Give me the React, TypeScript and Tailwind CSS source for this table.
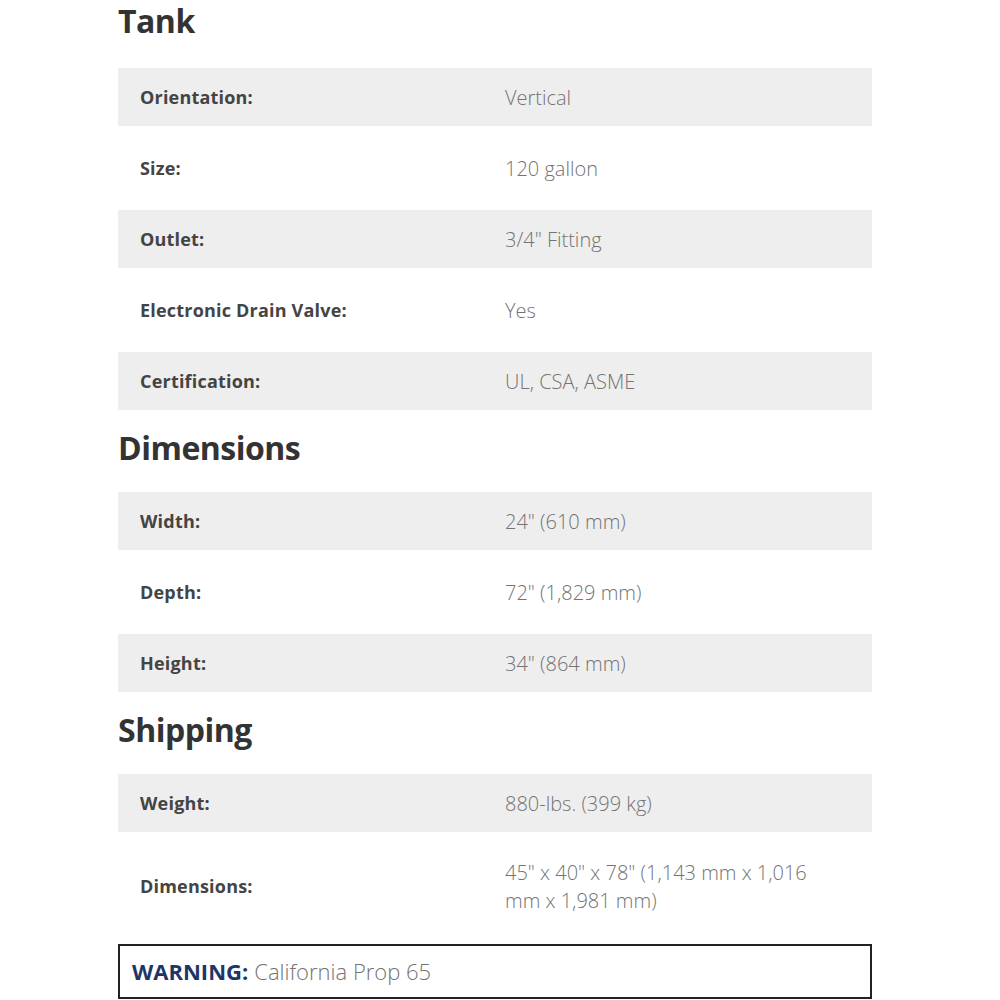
import React from 'react';

type Row = { label: string; value: string[]; tall?: boolean };
type Section = { title: string; rows: Row[] };

const sections: Section[] = [
  {
    title: 'Tank',
    rows: [
      { label: 'Orientation:', value: ['Vertical'] },
      { label: 'Size:', value: ['120 gallon'] },
      { label: 'Outlet:', value: ['3/4" Fitting'] },
      { label: 'Electronic Drain Valve:', value: ['Yes'] },
      { label: 'Certification:', value: ['UL, CSA, ASME'] },
    ],
  },
  {
    title: 'Dimensions',
    rows: [
      { label: 'Width:', value: ['24" (610 mm)'] },
      { label: 'Depth:', value: ['72" (1,829 mm)'] },
      { label: 'Height:', value: ['34" (864 mm)'] },
    ],
  },
  {
    title: 'Shipping',
    rows: [
      { label: 'Weight:', value: ['880-lbs. (399 kg)'] },
      { label: 'Dimensions:', value: ['45" x 40" x 78" (1,143 mm x 1,016', 'mm x 1,981 mm)'], tall: true },
    ],
  },
];

function SpecRow({ row, index }: { row: Row; index: number }) {
  const shaded = index % 2 === 0;
  const height = shaded ? 'h-[58px]' : row.tall ? 'h-[108px]' : 'h-[84px]';
  return (
    <div className={`flex items-center ${height} ${shaded ? 'bg-[#eeeeee]' : 'bg-white'}`}>
      <div className="w-[387px] pl-[22px] pt-[1px] text-[18px] font-bold text-[#444444] tracking-[0.2px]">
        {row.label}
      </div>
      <div className="flex-1 pt-[1px] text-[20px] font-light leading-[28px] text-[#737373]">
        {row.value.map((line) => (
          <div key={line}>{line}</div>
        ))}
      </div>
    </div>
  );
}

export default function App() {
  return (
    <div
      className="w-[1000px] h-[1000px] bg-white overflow-hidden"
      style={{ fontFamily: '"Open Sans", "Noto Sans", sans-serif' }}
    >
      <div className="ml-[118px] w-[754px]">
        {sections.map((section, si) => (
          <div key={section.title}>
            <h2
              className={`text-[32px] font-bold leading-[40px] text-[#333333] tracking-[-0.5px] ${
                si === 0 ? 'pt-[1px] pb-[27px]' : 'pt-[18px] pb-[24px]'
              }`}
            >
              {section.title}
            </h2>
            {section.rows.map((row, i) => (
              <SpecRow key={row.label} row={row} index={i} />
            ))}
          </div>
        ))}

        <div className="mt-[4px] h-[55px] border-2 border-[#222222] flex items-center pl-[12px] text-[22px]">
          <span className="font-bold text-[#1f3566]">WARNING:</span>
          <span className="ml-[6px] font-light text-[#737373]">California Prop 65</span>
        </div>
      </div>
    </div>
  );
}
